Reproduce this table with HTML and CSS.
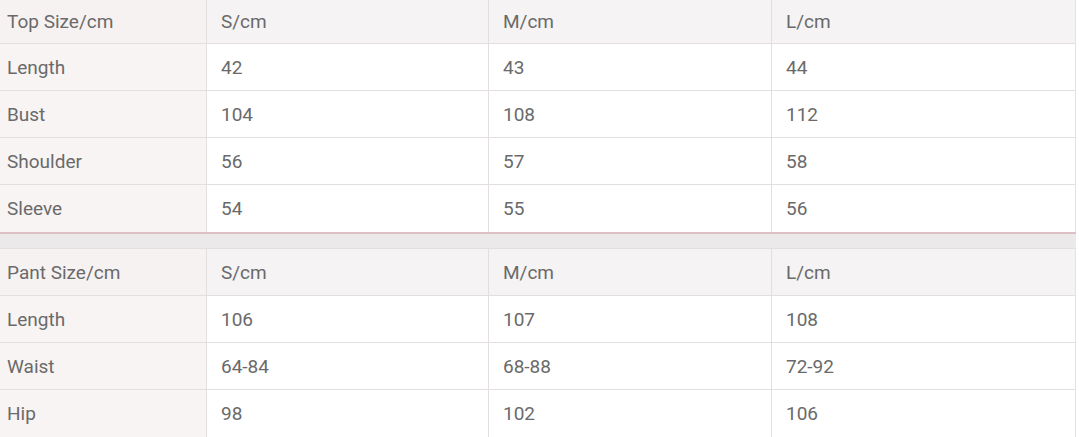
FILE: index.html
```html
<!DOCTYPE html>
<html>
<head>
<meta charset="utf-8">
<link rel="stylesheet" href="styles.css">
</head>
<body>
<div class="page">
  <div class="table">
    <div class="row head"><div class="cell first">Top Size/cm</div><div class="cell">S/cm</div><div class="cell">M/cm</div><div class="cell">L/cm</div></div>
    <div class="row"><div class="cell first">Length</div><div class="cell">42</div><div class="cell">43</div><div class="cell">44</div></div>
    <div class="row"><div class="cell first">Bust</div><div class="cell">104</div><div class="cell">108</div><div class="cell">112</div></div>
    <div class="row"><div class="cell first">Shoulder</div><div class="cell">56</div><div class="cell">57</div><div class="cell">58</div></div>
    <div class="row"><div class="cell first">Sleeve</div><div class="cell">54</div><div class="cell">55</div><div class="cell">56</div></div>
  </div>
  <div class="divider"></div>
  <div class="table">
    <div class="row head"><div class="cell first">Pant Size/cm</div><div class="cell">S/cm</div><div class="cell">M/cm</div><div class="cell">L/cm</div></div>
    <div class="row"><div class="cell first">Length</div><div class="cell">106</div><div class="cell">107</div><div class="cell">108</div></div>
    <div class="row"><div class="cell first">Waist</div><div class="cell">64-84</div><div class="cell">68-88</div><div class="cell">72-92</div></div>
    <div class="row"><div class="cell first">Hip</div><div class="cell">98</div><div class="cell">102</div><div class="cell">106</div></div>
  </div>
</div>
</body>
</html>
```
FILE: styles.css
```css
html, body { margin: 0; padding: 0; background: #fff; }
.page {
  width: 1076px;
  font-family: Roboto, "Liberation Sans", sans-serif;
  font-size: 19px;
  color: #6a6a6a;
}
.table { border-right: 1px solid #e6e2e2; }
.row {
  display: grid;
  grid-template-columns: 206px 282px 283px 1fr;
  height: 47px;
  border-bottom: 1px solid #e3dfdf;
  box-sizing: border-box;
}
.row:last-child { border-bottom: none; }
.cell {
  display: flex;
  align-items: center;
  padding-left: 14px;
  border-left: 1px solid #e3dfdf;
  background: #fff;
}
.cell.first {
  border-left: none;
  padding-left: 7px;
  background: #f8f4f4;
}
.head .cell { background: #f5f3f3; }
.head .cell.first { background: #f7f2f2; }
.table:first-child .head { height: 44px; }
.divider {
  height: 17px;
  box-sizing: border-box;
  border-top: 2px solid #dcc0c6;
  border-bottom: 1px solid #e3dfdf;
  background: #ebe9e9;
}
```
